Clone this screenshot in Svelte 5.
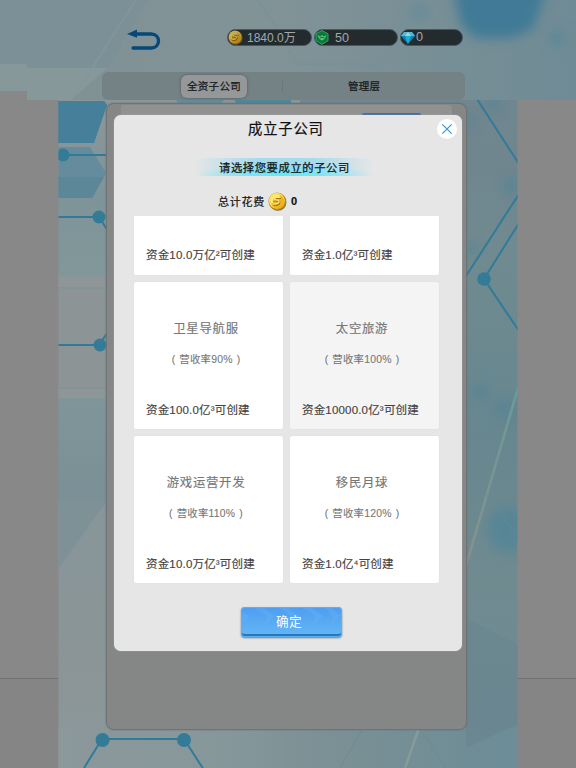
<script>
  const resources = [
    { kind: 'coin', value: '1840.0万', width: 85 },
    { kind: 'gem', value: '50', width: 84 },
    { kind: 'diamond', value: '0', width: 63 }
  ];
  const companies = [
    { name: '', rate: '', cost: '资金10.0万亿²可创建' },
    { name: '', rate: '', cost: '资金1.0亿³可创建' },
    { name: '卫星导航服', rate: '90%', cost: '资金100.0亿³可创建' },
    { name: '太空旅游', rate: '100%', cost: '资金10000.0亿³可创建', dim: true },
    { name: '游戏运营开发', rate: '110%', cost: '资金10.0万亿³可创建' },
    { name: '移民月球', rate: '120%', cost: '资金1.0亿⁴可创建' }
  ];
</script>

{#snippet coin()}
  <svg class="coin" viewBox="0 0 20 20">
    <circle cx="10.4" cy="10.7" r="9" fill="#7d6a36" />
    <circle cx="9.7" cy="9.7" r="9.2" fill="#c68d13" />
    <circle cx="9.3" cy="9.2" r="8.2" fill="#ffec70" />
    <circle cx="10" cy="10" r="7.3" fill="#efb51d" />
    <path d="M4.5 12A5.8 5.8 0 0 1 12 4.3" fill="none" stroke="#fff184" stroke-width="1.8" />
    <path d="M13.7 6.5 8.4 6.3 7.2 9.1q5.2-.3 4.8 2.2Q11.2 14.4 6 13.6" fill="none" stroke="#b26d05" stroke-width="2" />
    <path d="M13.3 5.6 8 5.5 6.8 8.3q5.2-.3 4.8 2.2Q10.8 13.2 5.6 12.5" fill="none" stroke="#fff08b" stroke-width="1.3" />
  </svg>
{/snippet}

<div class="screen">
  <svg class="backdrop" viewBox="0 0 576 768">
    <defs>
      <linearGradient id="sky" x1="0" y1="0" x2="1" y2="0">
        <stop offset="0" stop-color="#7f9194" /><stop offset=".45" stop-color="#829397" /><stop offset="1" stop-color="#6f8b95" />
      </linearGradient>
      <linearGradient id="left" x1="0" y1="0" x2="0" y2="1">
        <stop offset="0" stop-color="#8b9699" /><stop offset=".15" stop-color="#7e9499" /><stop offset=".26" stop-color="#82979a" /><stop offset=".28" stop-color="#8d9495" /><stop offset=".43" stop-color="#8d9495" /><stop offset=".45" stop-color="#7f9599" /><stop offset=".6" stop-color="#7a9096" /><stop offset=".61" stop-color="#879699" /><stop offset=".82" stop-color="#8b9597" /><stop offset="1" stop-color="#8c9799" />
      </linearGradient>
      <linearGradient id="right" x1="0" y1="0" x2="0" y2="1">
        <stop offset="0" stop-color="#70878f" /><stop offset=".1" stop-color="#70868f" /><stop offset=".24" stop-color="#6f8b90" /><stop offset=".5" stop-color="#67868f" /><stop offset=".72" stop-color="#708b90" /><stop offset="1" stop-color="#6d8993" />
      </linearGradient>
      <linearGradient id="base" x1="0" y1="0" x2="1" y2="0">
        <stop offset="0" stop-color="#8c989a" /><stop offset=".36" stop-color="#86979b" /><stop offset=".6" stop-color="#7a9094" /><stop offset="1" stop-color="#6c8c97" />
      </linearGradient>
      <linearGradient id="ray" x1="0" y1="0" x2="0" y2="1"><stop offset="0" stop-color="#699b98" /><stop offset="1" stop-color="#87908e" /></linearGradient>
      <filter id="soft" x="-80%" y="-80%" width="260%" height="260%"><feGaussianBlur stdDeviation="6" /></filter>
      <clipPath id="stage"><path d="M58.5 100H517.5V768H58.5z" /></clipPath>
      <clipPath id="top"><path d="M0 0H576V100H27V91H0z" /></clipPath>
    </defs>
    <rect width="576" height="768" fill="#888" />
    <path d="M0 678.5H576V768H0z" fill="#858585" /><path d="M0 678.5H576" stroke="#707070" />
    <g clip-path="url(#stage)">
      <rect x="58" y="100" width="250" height="668" fill="url(#left)" />
      <rect x="300" y="100" width="218" height="668" fill="url(#right)" />
      <rect x="58" y="728" width="460" height="40" fill="url(#base)" />
      <path d="M58 101h46l3 4-13 38H58z" fill="#457f9a" />
      <path d="M94 143 106 124V106z" fill="#8b9699" /><path d="M58 101h46l3 4-13 38H58z" fill="#457f9a" />
      <path d="M58 147h32l16 26-14 25H58z" fill="#648c9c" /><path d="M58 177h46l-12 21H58z" fill="#5b8799" />
      <path d="M58 277h48v10H58zM58 389h48v9H58z" fill="#8e9697" />
      <path d="M58 288h48M58 388h48M106 189l-10 16 10 12" fill="none" stroke="#7c9297" />
      <path d="M58 569 106 502V500H58z" fill="#7e9197" />
      <g fill="#44839b" filter="url(#soft)" opacity=".55"><circle cx="494" cy="104" r="7" /><circle cx="470" cy="121" r="6" /><circle cx="512" cy="186" r="8" /><circle cx="471" cy="249" r="6" /><circle cx="480" cy="391" r="7" /><circle cx="504" cy="409" r="8" /><ellipse cx="507" cy="530" rx="19" ry="23" /></g>
      <path d="M466 618 518 645V724L466 748z" fill="#69858f" opacity=".75" />
      <g fill="none" stroke="#317b99" stroke-width="2">
        <path d="M58 155h48M58 217h41l14 22M58 345h41l15-22M84 768l18-29h82l20 31M477 99l42 65M466 276l53-82M519 223l-35 56 35 52" />
      </g>
      <g fill="#347b98"><circle cx="63" cy="155" r="6.5" /><circle cx="99" cy="217" r="6.5" /><circle cx="100" cy="345" r="6.5" /><circle cx="102.5" cy="740" r="7" /><circle cx="184" cy="740" r="7" /><circle cx="484" cy="279" r="6.8" /></g>
      <path d="M518 388 466 566" stroke="url(#ray)" stroke-width="2.6" /><path d="M420 725 405 768" stroke="#879c9a" stroke-width="2.4" />
      <path d="M362 730 340 768M422 732l24 36M466 468l52 69" stroke="#688995" opacity=".7" />
      <path d="M175 99h50l-5 6h-40z" fill="#648c9c" /><path d="M234 99h57v4h-55z" fill="#4d879d" />
    </g>
    <g clip-path="url(#top)">
      <rect width="576" height="100" fill="url(#sky)" />
      <path d="M0 64h27v4h80L71 100H0z" fill="#86989a" /><path d="M0 0h148L108 68H27v-4H0z" fill="#7b9097" />
      <path d="M136 0 72 99" stroke="#83989b" stroke-width="2.5" opacity=".7" />
      <path d="m288 50 10 14h83l25-49M546 0l30 33M258 0l20 30" fill="none" stroke="#718f98" opacity=".7" />
      <g filter="url(#soft)"><path d="M452-14h96l-15 43-22 9h-36l-14-14z" fill="#407a96" /><circle cx="419" cy="12" r="8" fill="#658a97" /><circle cx="557" cy="38" r="8" fill="#5b8797" /></g>
    </g>
  </svg>

  <div class="page">
    <header>
      <svg class="back" viewBox="0 0 34 22"><path d="M9 5h15c10 0 10 14 0 14H6" fill="none" stroke="#064879" stroke-width="3.3" stroke-linecap="round" /><path d="m0 5 10-4.5v8.2z" fill="#064879" /></svg>
      <div class="resources">
        {#each resources as r}
          <div class="resource {r.kind}" style="width: {r.width}px">
            {#if r.kind === 'coin'}
              {@render coin()}
            {:else if r.kind === 'gem'}
              <svg class="icon" viewBox="0 0 14 15"><path d="m7 .5 6 3.3v7L7 14.3l-6-3.5v-7z" fill="#087a36" stroke="#38a461" /><path d="m2.5 5 3 1.4L7 5l1.5 1.4 3-1.4-1.8 4L7 10.5 4.3 9z" fill="#60bd80" /><path d="m4.5 8 2.5-.7 2.5.7" fill="none" stroke="#087a36" /></svg>
            {:else}
              <svg class="icon" viewBox="0 0 14 13"><path d="M3 1h8l3 4-7 8-7-8z" fill="#0785b5" /><path d="M3 1h8l3 4H0z" fill="#5ab6cf" /><path d="M4 5h6l-3 8z" fill="#22add0" /><path d="m4 5 3-4 3 4z" fill="#94d4df" /></svg>
            {/if}
            <span>{r.value}</span>
          </div>
        {/each}
      </div>
    </header>
    <nav><div><span class="active">全资子公司</span></div><i></i><div><span>管理层</span></div></nav>
    <section class="panel"><div class="sheet"><b></b></div></section>
  </div>

  <div class="overlay">
    <div class="modal">
      <div class="titlebar"><h1>成立子公司</h1>
        <button class="close" aria-label="关闭"><svg viewBox="0 0 20 20"><path d="m5.3 5.3 9.4 9.4m0-9.4-9.4 9.4" stroke="#3497de" stroke-width="1.2" /></svg></button>
      </div>
      <div class="prompt"><span>请选择您要成立的子公司</span></div>
      <div class="total"><span>总计花费</span>{@render coin()}<b>0</b></div>
      <div class="cards">
        {#each companies as c}
          <article class:dim={c.dim} class:cut={!c.name}>
            {#if c.name}<h2>{c.name}</h2><p class="rate"><i>(</i>营收率{c.rate}<i class="end">)</i></p>{/if}
            <p class="cost">{c.cost}</p>
          </article>
        {/each}
      </div>
      <button class="confirm">
        <svg viewBox="0 0 101 27" preserveAspectRatio="none"><path d="M2 5l7 5-7 5V9zM13 1h10l11 8-10 9 2-9zM38 1h9l11 8-10 9 2-9zM62 1h9l11 8-10 9 2-9zM84 1h7l8 8-8 7 1-7z" fill="#78b8f6" opacity=".25" /></svg>
        <span>确定</span>
      </button>
    </div>
  </div>
</div>

<style>
  :global(body) { margin: 0; }
  * { box-sizing: border-box; }
  .screen { display: grid; width: 576px; height: 768px; overflow: hidden; font-family: "Liberation Sans", "Noto Sans CJK SC", sans-serif; white-space: nowrap; }
  .screen > * { grid-area: 1 / 1; }
  .backdrop { width: 576px; height: 768px; }
  svg { display: block; flex: none; }
  h1, h2, p { margin: 0; font-weight: 400; }
  button { border: 0; padding: 0; font-family: inherit; }
  .page { z-index: 1; display: flex; flex-direction: column; padding-left: 102px; }
  header { display: flex; height: 72px; padding: 29px 0 0 25px; }
  .back { width: 34px; height: 22px; }
  .resources { display: flex; gap: 2px; padding-left: 66px; }
  .resource { display: flex; align-items: center; height: 17px; border: 1px solid #42596a; border-radius: 9px; background: #232b2e; color: #a4a8a9; font-size: 12.6px; line-height: 15px; }
  .resource .coin { width: 15px; height: 15px; filter: brightness(.77); }
  .resource .icon { width: 14px; height: 15px; }
  .resource.coin span { padding: 1px 0 0 4px; font-size: 12px; }
  .resource.gem span { padding: 1px 0 0 6px; }
  .resource.diamond span { padding-left: 1px; }
  nav { display: flex; align-items: center; width: 363px; height: 28px; border-radius: 6px; background: #748286; color: #171b1d; font-size: 10.5px; -webkit-text-stroke: .25px; }
  nav div { display: flex; width: 180px; padding-left: 79px; }
  nav div:last-child { width: 182px; padding-left: 65px; }
  nav i { width: 1px; height: 11px; background: #69777b; }
  nav span { letter-spacing: .3px; line-height: 22px; }
  .active { width: 66px; height: 23px; text-align: center; border-radius: 6px; background: #969798; box-shadow: 0 0 3px #4d585c; }
  .panel { width: 361px; height: 627px; margin: 3px 0 0 4px; border: 1px solid #6e7475; border-radius: 8px; background: #858686; box-shadow: 0 0 2px #6b7375; padding: 1px 14px; }
  .sheet { display: flex; justify-content: flex-end; height: 20px; padding: 8px 31px 0 0; border-radius: 3px; background: #919191; }
  .sheet b { width: 59px; height: 6px; border-radius: 2px; background: #426f99; }
  .overlay { z-index: 2; padding: 115px 0 0 114px; }
  .modal { display: flex; flex-direction: column; align-items: center; width: 348px; height: 536px; border-radius: 7px; background: #e6e6e6; box-shadow: 0 0 1px #cbd0d2; }
  .titlebar { display: flex; width: 100%; height: 29px; padding: 4px 5px 0 134px; justify-content: space-between; }
  h1 { font-size: 14.3px; line-height: 21px; letter-spacing: .85px; color: #111; -webkit-text-stroke: .2px; }
  .close { width: 20px; height: 20px; border-radius: 50%; background: white; }
  .prompt { width: 180px; height: 18px; margin: 14px 8px 0 0; padding-left: 25px; font-size: 11.3px; line-height: 20px; letter-spacing: .6px; color: #101719; -webkit-text-stroke: .25px; background: radial-gradient(ellipse 50% 70% at 50% 100%, #5eeafa 0, #65e4f700 100%), linear-gradient(90deg, #a6daed00, #a6daed 35%, #a6daed 65%, #a6daed00); }
  .total { display: flex; align-items: center; align-self: flex-start; height: 20px; margin: 15px 0 0 104px; font-size: 11px; color: #111; -webkit-text-stroke: .2px; }
  .total span { letter-spacing: .75px; }
  .total .coin { width: 19px; height: 19px; margin: 0 4px 0 3px; }
  .total b { font-size: 11px; }
  .cards { display: grid; grid-template-columns: 151px 151px; grid-template-rows: 60px 149px 149px; gap: 5px; width: 307px; margin: 5px 0 0 -3px; }
  article { display: flex; flex-direction: column; align-items: center; padding: 37px 0 0; border: 1px solid #dde5ec; border-radius: 3px; background: #fff; color: #777; }
  article.cut { border-top: 0; border-radius: 0 0 3px 3px; padding-top: 30px; }
  article.dim { background: #f4f4f4; }
  h2 { font-size: 12.4px; line-height: 20px; letter-spacing: .7px; padding-right: 5px; -webkit-text-stroke: .15px; }
  .rate { margin-top: 13px; padding-right: 5px; font-size: 10.4px; line-height: 16px; letter-spacing: .22px; -webkit-text-stroke: .1px; }
  .rate i { font-style: normal; padding-right: 4px; }
  .rate i.end { padding: 0 0 0 4px; }
  .cost { align-self: flex-start; margin-left: 12px; font-size: 11.5px; line-height: 18px; letter-spacing: .18px; color: #463f3f; -webkit-text-stroke: .15px; }
  article:not(.cut) .cost { margin-top: 33px; }
  .confirm { display: grid; width: 101px; height: 30px; margin-top: 23px; margin-left: 7px; border-radius: 4px; background: linear-gradient(#4c9df2, #64b8f4); box-shadow: inset 0 0 0 1px #5eb0f1, inset 0 -3px #2876bb, 0 1px 2px #667985; color: white; font-size: 12.6px; line-height: 31px; }
  .confirm > * { grid-area: 1 / 1; }
  .confirm svg { width: 101px; height: 27px; }
  .confirm span { padding-right: 5px; letter-spacing: .3px; }
</style>
